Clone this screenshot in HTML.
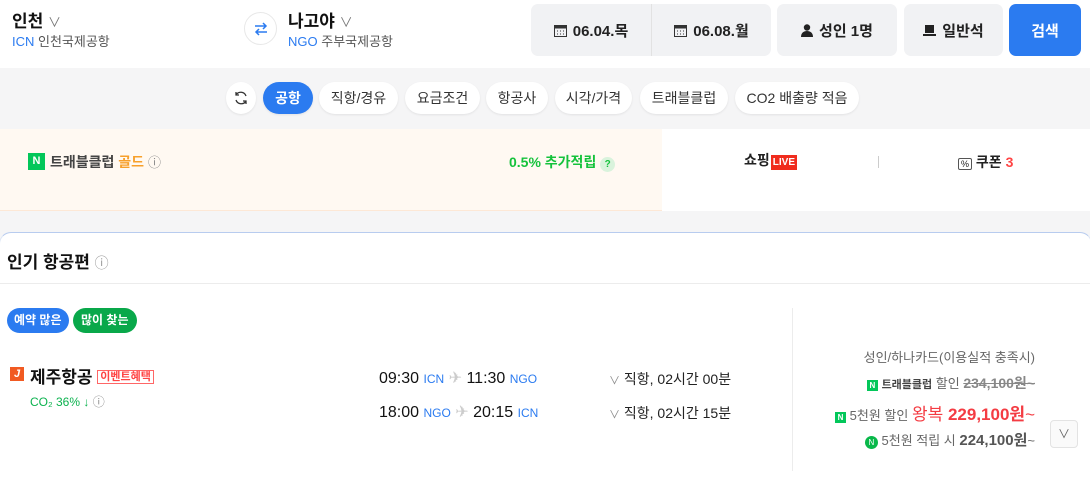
<!DOCTYPE html>
<html><head><meta charset="utf-8"><style>
*{margin:0;padding:0;box-sizing:border-box}
body{width:1090px;height:471px;overflow:hidden;background:#f5f5f6;font-family:"Liberation Sans","Noto Sans CJK KR",sans-serif;position:relative;color:#111}
.a{position:absolute;white-space:nowrap}
.hdr{left:0;top:0;width:1090px;height:68px;background:#fff}
.box{background:#f1f2f4;border-radius:7px;height:52px;top:4px;display:flex;align-items:center;justify-content:center;font-weight:bold;font-size:15px;color:#222;gap:6px}
.chip{top:82px;height:32px;border-radius:16px;background:#fff;font-size:14px;color:#333;display:flex;align-items:center;justify-content:center;box-shadow:0 1px 2px rgba(0,0,0,.08)}
.blue{color:#2b7bf0}
</style></head><body>
<div class="a hdr"></div>
<div class="a" style="left:12px;top:7px;font-size:17px;font-weight:bold">인천 <span style="font-weight:normal;color:#777;font-size:13px">∨</span></div>
<div class="a" style="left:12px;top:31px;font-size:13px;color:#555"><span class="blue">ICN</span> 인천국제공항</div>
<div class="a" style="left:244px;top:12px;width:33px;height:33px;border-radius:50%;border:1px solid #e8e8e8;background:#fff;display:flex;align-items:center;justify-content:center">
<svg width="16" height="16" viewBox="0 0 16 16" fill="none" stroke="#2b7bf0" stroke-width="1.5"><path d="M2 5h11M10 2l3 3-3 3M14 11H3M6 8l-3 3 3 3"/></svg></div>
<div class="a" style="left:288px;top:7px;font-size:17px;font-weight:bold">나고야 <span style="font-weight:normal;color:#777;font-size:13px">∨</span></div>
<div class="a" style="left:288px;top:31px;font-size:13px;color:#555"><span class="blue">NGO</span> 주부국제공항</div>
<div class="a box" style="left:531px;width:240px;gap:0;justify-content:flex-start">
<span style="width:120px;display:flex;align-items:center;justify-content:center;gap:6px"><svg width="13" height="13" viewBox="0 0 13 13"><rect x="0.5" y="1.5" width="12" height="11" fill="none" stroke="#333"/><rect x="0.5" y="1.5" width="12" height="3" fill="#333"/><path d="M3 7h1M6 7h1M9 7h1M3 10h1M6 10h1M9 10h1" stroke="#333"/></svg>06.04.목</span>
<span style="width:1px;height:52px;background:#e2e2e2"></span>
<span style="width:119px;display:flex;align-items:center;justify-content:center;gap:6px"><svg width="13" height="13" viewBox="0 0 13 13"><rect x="0.5" y="1.5" width="12" height="11" fill="none" stroke="#333"/><rect x="0.5" y="1.5" width="12" height="3" fill="#333"/><path d="M3 7h1M6 7h1M9 7h1M3 10h1M6 10h1M9 10h1" stroke="#333"/></svg>06.08.월</span></div>
<div class="a box" style="left:777px;width:120px"><svg width="12" height="13" viewBox="0 0 12 13"><circle cx="6" cy="3.5" r="3.2" fill="#222"/><path d="M0 13c0-4 2.5-6 6-6s6 2 6 6z" fill="#222"/></svg>성인 1명</div>
<div class="a box" style="left:904px;width:99px"><svg width="13" height="11" viewBox="0 0 13 11"><rect x="2" y="0" width="9" height="8" fill="#222"/><rect x="0" y="9" width="13" height="2" fill="#222"/></svg>일반석</div>
<div class="a box" style="left:1009px;width:72px;background:#2b7bf0;color:#fff">검색</div>

<div class="a chip" style="left:226px;width:30px;border-radius:50%"><svg width="16" height="16" viewBox="0 0 16 16" fill="none" stroke="#333" stroke-width="1.3"><path d="M13 6a5.5 5.5 0 0 0-10-1M3 10a5.5 5.5 0 0 0 10 1M3 2v3h3M13 14v-3h-3"/></svg></div>
<div class="a chip" style="left:263px;width:50px;background:#2b7bf0;color:#fff;font-weight:bold">공항</div>
<div class="a chip" style="left:319px;width:79px">직항/경유</div>
<div class="a chip" style="left:405px;width:75px">요금조건</div>
<div class="a chip" style="left:486px;width:62px">항공사</div>
<div class="a chip" style="left:555px;width:77px">시각/가격</div>
<div class="a chip" style="left:640px;width:88px">트래블클럽</div>
<div class="a chip" style="left:735px;width:124px">CO2 배출량 적음</div>

<div class="a" style="left:0;top:129px;width:662px;height:82px;background:#fff9f2;border-bottom:1px solid #fde8d6"></div>
<div class="a" style="left:662px;top:129px;width:428px;height:82px;background:#fff"></div>
<div class="a" style="left:28px;top:153px;width:17px;height:17px;background:#03c75a;color:#fff;font-size:11px;font-weight:bold;text-align:center;line-height:17px">N</div>
<div class="a" style="left:50px;top:152px;font-size:14px;font-weight:bold;color:#444">트래블클럽 <span style="color:#f7a02b">골드</span> <span style="font-weight:normal;color:#888;font-size:13px">ⓘ</span></div>
<div class="a" style="left:509px;top:152px;font-size:14px;font-weight:bold;color:#15c23c">0.5% 추가적립 <span style="display:inline-block;width:15px;height:15px;border-radius:50%;background:#d9f3dc;font-size:10px;text-align:center;line-height:15px">?</span></div>
<div class="a" style="left:744px;top:150px;font-size:14px;font-weight:bold;color:#222">쇼핑<span style="background:#f02c1d;color:#fff;font-size:10px;padding:2px 2px;margin-left:1px">LIVE</span></div>
<div class="a" style="left:878px;top:156px;width:1px;height:12px;background:#ccc"></div>
<div class="a" style="left:958px;top:152px;font-size:14px;font-weight:bold;color:#222"><span style="font-size:9px;border:1px solid #555;border-radius:2px;padding:0 2px;font-weight:normal">%</span> 쿠폰 <span style="color:#f44">3</span></div>

<div class="a" style="left:-1px;top:232px;width:1093px;height:245px;background:#fff;border-top:1px solid #b8ccef;border-left:1px solid #dde6f5;border-right:1px solid #dde6f5;border-radius:12px 12px 0 0"></div>
<div class="a" style="left:7px;top:248px;font-size:17px;font-weight:bold">인기 항공편 <span style="font-weight:normal;color:#999;font-size:14px">ⓘ</span></div>
<div class="a" style="left:0;top:283px;width:1090px;height:1px;background:#ececec"></div>
<div class="a" style="left:7px;top:308px;height:25px;padding:0 7px;border-radius:13px;background:#2b7bf0;color:#fff;font-size:12px;font-weight:bold;line-height:25px">예약 많은</div>
<div class="a" style="left:73px;top:308px;height:25px;padding:0 8px;border-radius:13px;background:#09a84a;color:#fff;font-size:12px;font-weight:bold;line-height:25px">많이 찾는</div>
<div class="a" style="left:10px;top:367px;width:14px;height:14px;background:#f15a22;color:#fff;font-size:11px;font-style:italic;font-weight:bold;text-align:center;line-height:14px">J</div>
<div class="a" style="left:30px;top:363px;font-size:17px;font-weight:bold">제주항공 <span style="font-size:11px;color:#f44;border:1px solid #f66;padding:0 2px;vertical-align:3px">이벤트혜택</span></div>
<div class="a" style="left:30px;top:393px;font-size:12px;color:#0bb24e">CO₂ 36% ↓ <span style="color:#888">ⓘ</span></div>
<div class="a" style="left:379px;top:368px;font-size:16px">09:30 <span class="blue" style="font-size:12px">ICN</span> <span style="color:#ccc">✈</span> 11:30 <span class="blue" style="font-size:12px">NGO</span></div>
<div class="a" style="left:379px;top:402px;font-size:16px">18:00 <span class="blue" style="font-size:12px">NGO</span> <span style="color:#ccc">✈</span> 20:15 <span class="blue" style="font-size:12px">ICN</span></div>
<div class="a" style="left:609px;top:369px;font-size:14px;color:#222"><span style="color:#888;font-size:11px">∨</span> 직항, 02시간 00분</div>
<div class="a" style="left:609px;top:403px;font-size:14px;color:#222"><span style="color:#888;font-size:11px">∨</span> 직항, 02시간 15분</div>
<div class="a" style="left:792px;top:308px;width:1px;height:163px;background:#ececec"></div>
<div class="a" style="right:55px;top:347px;font-size:13px;color:#666">성인/하나카드(이용실적 충족시)</div>
<div class="a" style="right:55px;top:373px;font-size:13px;color:#666"><span style="display:inline-block;width:11px;height:11px;background:#03c75a;color:#fff;font-size:8px;font-weight:bold;text-align:center;line-height:11px">N</span> <b style="font-size:11px;color:#444">트래블클럽</b> 할인 <b style="text-decoration:line-through;color:#888;font-size:14px">234,100원~</b></div>
<div class="a" style="right:55px;top:400px;font-size:13px;color:#666"><span style="display:inline-block;width:11px;height:11px;background:#03c75a;color:#fff;font-size:8px;font-weight:bold;text-align:center;line-height:11px">N</span> 5천원 할인 <span style="color:#f43c43;font-size:17px">왕복 <b>229,100원</b>~</span></div>
<div class="a" style="right:55px;top:429px;font-size:13px;color:#666"><span style="display:inline-block;width:13px;height:13px;border-radius:50%;background:#09b84a;color:#fff;font-size:8px;text-align:center;line-height:13px">N</span> 5천원 적립 시 <b style="font-size:15px;color:#555">224,100원</b>~</div>
<div class="a" style="left:1050px;top:420px;width:28px;height:28px;border:1px solid #e3e3e3;border-radius:4px;background:#fafafa;text-align:center;line-height:26px;color:#666;font-size:12px">∨</div>
</body></html>
